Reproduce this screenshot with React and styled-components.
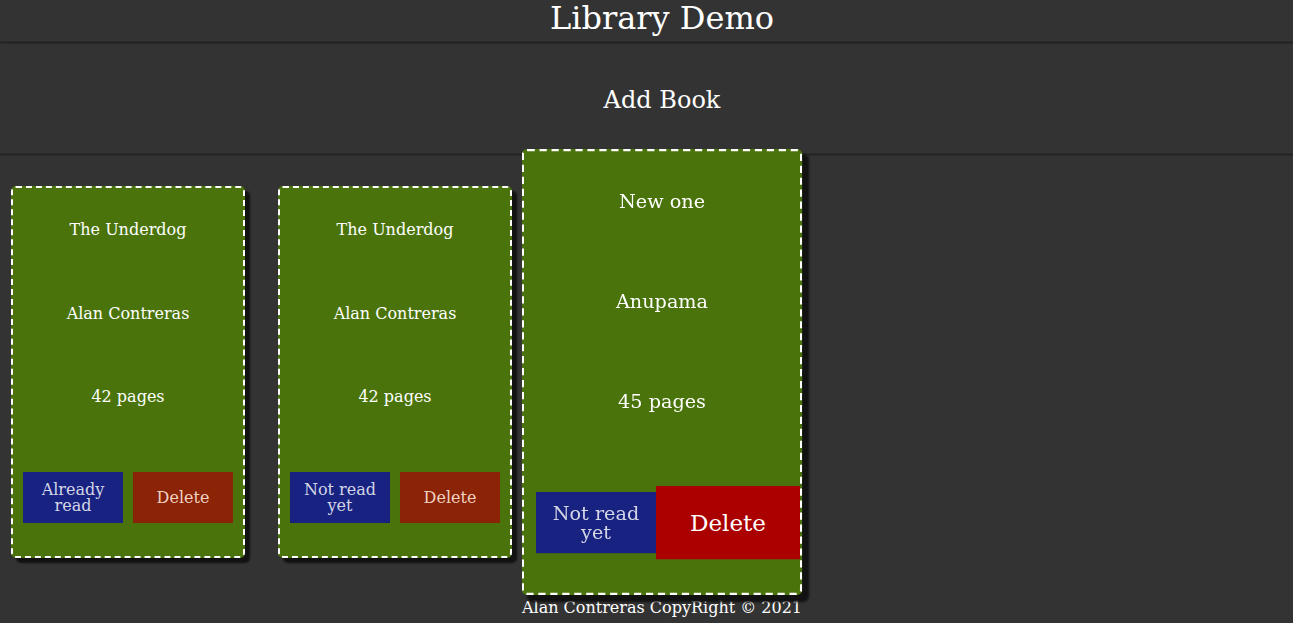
import React from 'react';
import styled, { createGlobalStyle } from 'styled-components';

const GlobalStyle = createGlobalStyle`
  html, body {
    margin: 0;
    padding: 0;
    background-color: #333333;
  }
  body {
    font-family: 'DejaVu Serif', serif;
    color: white;
    height: 623px;
    overflow: hidden;
  }
`;

const Page = styled.div`
  display: flex;
  flex-direction: column;
  width: 1324px;
  height: 623px;
`;

const Header = styled.header`
  height: 42px;
  box-sizing: border-box;
  padding-bottom: 6px;
  display: flex;
  align-items: center;
  justify-content: center;
  box-shadow: 0 1px 2px rgba(0, 0, 0, 0.45);
  border-bottom: 1px solid #2b2b2b;
`;

const Title = styled.h1`
  margin: 0;
  font-size: 32px;
  font-weight: normal;
  line-height: 1;
`;

const FormBar = styled.section`
  height: 111px;
  box-sizing: border-box;
  padding-top: 3px;
  display: flex;
  align-items: center;
  justify-content: center;
  box-shadow: 0 1px 2px rgba(0, 0, 0, 0.45);
  border-bottom: 1px solid #2b2b2b;
  margin-top: 1px;
`;

const AddButton = styled.button`
  background: none;
  border: none;
  color: white;
  font-family: 'DejaVu Serif', serif;
  font-size: 24px;
  cursor: pointer;
`;

const Shelf = styled.main`
  flex: 1;
  display: flex;
  align-items: flex-start;
  gap: 33px;
  padding: 32px 11px 0;
`;

const Card = styled.div`
  box-sizing: border-box;
  width: 234px;
  height: 372px;
  display: flex;
  flex-direction: column;
  justify-content: space-around;
  align-items: center;
  background-color: #4a740b;
  border: 2px dashed white;
  border-radius: 5px;
  box-shadow: 5px 5px 2px #121212;
  transform: ${(p) => (p.$hover ? 'scale(1.2)' : 'none')};
`;

const Field = styled.p`
  margin: 0;
  font-size: 16px;
  line-height: 18px;
  text-align: center;
`;

const Actions = styled.div`
  align-self: stretch;
  display: flex;
  justify-content: space-evenly;
  align-items: center;
`;

const ActionButton = styled.button`
  width: 100px;
  height: 51px;
  border: none;
  padding: 0 6px;
  font-family: 'DejaVu Serif', serif;
  font-size: 16px;
  line-height: 1;
  cursor: pointer;
  background-color: ${(p) => (p.$hover ? '#aa0000' : p.$kind === 'delete' ? '#8b2306' : '#172281')};
  color: ${(p) => (p.$hover ? '#ffffff' : p.$kind === 'delete' ? '#f0d2c2' : '#d4d6e6')};
  transform: ${(p) => (p.$hover ? 'scale(1.2)' : 'none')};
`;

const Footer = styled.footer`
  height: 25px;
  display: flex;
  align-items: flex-start;
  justify-content: center;
  font-size: 16px;
`;

const books = [
  { title: 'The Underdog', author: 'Alan Contreras', pages: 42, read: true },
  { title: 'The Underdog', author: 'Alan Contreras', pages: 42, read: false },
  { title: 'New one', author: 'Anupama', pages: 45, read: false, hover: true },
];

export default function App() {
  return (
    <Page>
      <GlobalStyle />
      <Header>
        <Title>Library Demo</Title>
      </Header>
      <FormBar>
        <AddButton>Add Book</AddButton>
      </FormBar>
      <Shelf>
        {books.map((b, i) => (
          <Card key={i} $hover={b.hover}>
            <Field>{b.title}</Field>
            <Field>{b.author}</Field>
            <Field>{b.pages} pages</Field>
            <Actions>
              <ActionButton>{b.read ? 'Already read' : 'Not read yet'}</ActionButton>
              <ActionButton $kind="delete" $hover={b.hover}>Delete</ActionButton>
            </Actions>
          </Card>
        ))}
      </Shelf>
      <Footer>Alan Contreras CopyRight © 2021</Footer>
    </Page>
  );
}
